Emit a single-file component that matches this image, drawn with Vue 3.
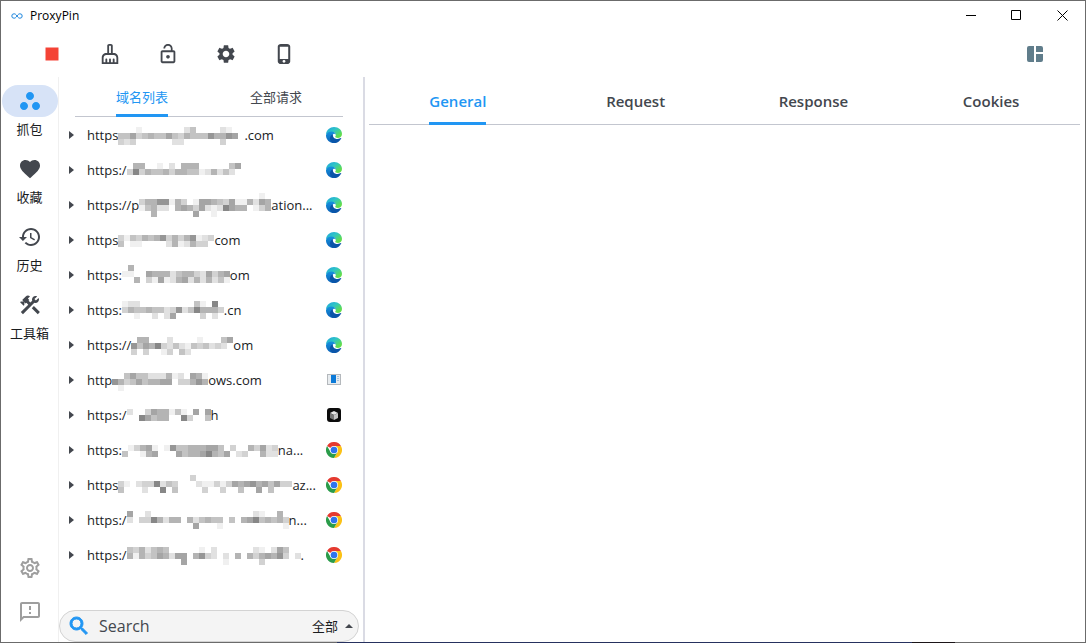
<script setup>
import { ref } from "vue";

const activeNav = ref("抓包");
const activeListTab = ref("域名列表");
const activeDetailTab = ref("General");
const keyword = ref("");
const scope = ref("全部");

const listTabs = ["域名列表", "全部请求"];
const detailTabs = ["General", "Request", "Response", "Cookies"];

const tools = [
  { name: "Stop", color: "#f44336", size: 26, path: "M6 6h12v12H6z" },
  {
    name: "Clear",
    color: "#43474e",
    size: 22,
    path: "M16 11h-1V3c0-1.1-.9-2-2-2h-2c-1.1 0-2 .9-2 2v8H8c-2.76 0-5 2.24-5 5v7h18v-7c0-2.76-2.24-5-5-5zm-5-8h2v8h-2V3zm8 18h-2v-3c0-.55-.45-1-1-1s-1 .45-1 1v3h-2v-3c0-.55-.45-1-1-1s-1 .45-1 1v3H9v-3c0-.55-.45-1-1-1s-1 .45-1 1v3H5v-5c0-1.65 1.35-3 3-3h8c1.65 0 3 1.35 3 3v5z",
  },
  {
    name: "HTTPS",
    color: "#43474e",
    size: 22,
    path: "M12 17c1.1 0 2-.9 2-2s-.9-2-2-2-2 .9-2 2 .9 2 2 2zm6-9h-1V6c0-2.76-2.24-5-5-5S7 3.24 7 6h1.9c0-1.71 1.39-3.1 3.1-3.1 1.71 0 3.1 1.39 3.1 3.1v2H6c-1.1 0-2 .9-2 2v10c0 1.1.9 2 2 2h12c1.1 0 2-.9 2-2V10c0-1.1-.9-2-2-2zm0 12H6V10h12v10z",
  },
  {
    name: "Settings",
    color: "#43474e",
    size: 22,
    path: "M19.14 12.94c.04-.3.06-.61.06-.94 0-.32-.02-.64-.07-.94l2.03-1.58c.18-.14.23-.41.12-.61l-1.92-3.32c-.12-.22-.37-.29-.59-.22l-2.39.96c-.5-.38-1.03-.7-1.62-.94l-.36-2.54c-.04-.24-.24-.41-.48-.41h-3.84c-.24 0-.43.17-.47.41l-.36 2.54c-.59.24-1.13.57-1.62.94l-2.39-.96c-.22-.08-.47 0-.59.22L2.74 8.87c-.12.21-.08.47.12.61l2.03 1.58c-.05.3-.09.63-.09.94s.02.64.07.94l-2.03 1.58c-.18.14-.23.41-.12.61l1.92 3.32c.12.22.37.29.59.22l2.39-.96c.5.38 1.03.7 1.62.94l.36 2.54c.05.24.24.41.48.41h3.84c.24 0 .44-.17.47-.41l.36-2.54c.59-.24 1.13-.56 1.62-.94l2.39.96c.22.08.47 0 .59-.22l1.92-3.32c.12-.22.07-.47-.12-.61l-2.01-1.58zM12 15.6c-1.98 0-3.6-1.62-3.6-3.6s1.62-3.6 3.6-3.6 3.6 1.62 3.6 3.6-1.62 3.6-3.6 3.6z",
  },
  {
    name: "Phone",
    color: "#43474e",
    size: 22,
    path: "M15.500 1h-7C6.800 1 5.200 2.100 5.200 3.800v16.400c0 1.700 1.600 2.800 3.300 2.800h7c1.700 0 3.300-1.100 3.300-2.800V3.800c0-1.700-1.600-2.800-3.300-2.800zM12 21.500c-.9 0-1.600-.7-1.600-1.500s.7-1.500 1.600-1.500 1.600.7 1.600 1.500-.7 1.500-1.600 1.500zM16.600 17.500H7.400V4h9.200v13.500z",
  },
];

const navItems = [
  {
    label: "抓包",
    path: "M6 13c-2.2 0-4 1.8-4 4s1.8 4 4 4 4-1.8 4-4-1.8-4-4-4zm6-10C9.8 3 8 4.8 8 7s1.8 4 4 4 4-1.8 4-4-1.8-4-4-4zm6 10c-2.2 0-4 1.8-4 4s1.8 4 4 4 4-1.8 4-4-1.8-4-4-4z",
  },
  {
    label: "收藏",
    path: "M12 21.35l-1.45-1.32C5.4 15.36 2 12.28 2 8.5 2 5.42 4.42 3 7.5 3c1.74 0 3.41.81 4.5 2.09C13.09 3.81 14.76 3 16.5 3 19.58 3 22 5.42 22 8.5c0 3.78-3.4 6.86-8.55 11.54L12 21.35z",
  },
  {
    label: "历史",
    path: "M13 3c-4.97 0-9 4.03-9 9H1l3.89 3.89.07.14L9 12H6c0-3.87 3.13-7 7-7s7 3.13 7 7-3.13 7-7 7c-1.93 0-3.68-.79-4.94-2.06l-1.42 1.42C8.27 19.99 10.51 21 13 21c4.97 0 9-4.03 9-9s-4.03-9-9-9zm-1 5v5l4.28 2.54.72-1.21-3.5-2.08V8H12z",
  },
  {
    label: "工具箱",
    path: "M13.783 15.172l2.121-2.121 5.996 5.996-2.121 2.121zM17.5 10c1.93 0 3.5-1.57 3.5-3.5 0-.58-.16-1.12-.41-1.6l-2.7 2.7-1.49-1.49 2.7-2.7c-.48-.25-1.02-.41-1.6-.41C15.57 3 14 4.57 14 6.5c0 .41.08.8.21 1.16l-1.85 1.85-1.78-1.78.71-.71-1.41-1.41L12 3.49c-1.17-1.17-3.07-1.17-4.24 0L4.22 7.03l1.41 1.41H2.81l-.71.71 3.54 3.54.71-.71V9.15l1.41 1.41.71-.71 1.78 1.78-7.41 7.41 2.12 2.12L16.34 9.79c.36.13.75.21 1.16.21z",
  },
];

// mask: one digit per 6px block, a higher digit is a darker grey
const domains = [
  { start: "https", end: ".com", app: "edge", y: 10, mask: ["...1.......24....21..", "44634544643544475576.", "323......22......3..."] },
  { start: "https:/", end: "", app: "edge", y: 11, mask: [".55..1.2.555.....46", "383544535544125242."] },
  { start: "https://p", end: "ation...", app: "edge", y: 6, mask: ["....................1.", "35577153.1665436115265", "14522.565362128655.135", "..5......6..1........."] },
  { start: "https", end: "com", app: "edge", y: 13, mask: ["3143545735357123", "4.11....2512533."] },
  { start: "https:", end: "om", app: "edge", y: 8, mask: [".5................", "11..65552455326356", "..5.31612562525241"] },
  { start: "https:", end: ".cn", app: "edge", y: 9, mask: ["122.........41.8.", "35445442372485553", "..1..2.26....3.2."] },
  { start: "https://", end: "om", app: "edge", y: 10, mask: [".55...2....1...46", "7465832421434232.", "3.3..13.42......."] },
  { start: "http", end: "ows.com", app: "window", y: 11, mask: ["..4644222512.651", "7534645566.33575", ".1.............."] },
  { start: "https:/", end: "h", app: "cube", y: 12, mask: ["2..3655141.6.6", "..86455..83..4"] },
  { start: "https:", end: "na...", app: "chrome", y: 13, mask: [".13561.1744555664.3..53623", "4..156...645568546.23..522"] },
  { start: "https", end: "az...", app: "chrome", y: 8, mask: ["............3................", "31.2338243...2113136567564633", "4...2..8.4....3..3..4..6.4..."] },
  { start: "https:/", end: "n...", app: "chrome", y: 9, mask: ["6..2.................21..5.", "2.3385255.524544.4.56845453", "...........6...1..........1"] },
  { start: "https:/", end: ".", app: "chrome", y: 10, mask: ["4352454.....1.2......21.264..", "5153465266.5732.2.5.5356573.2", ".........6......1.....3......"] },
];

const blocks = (domain) => {
  const result = [];
  domain.mask.forEach((line, row) => {
    [...line].forEach((level, col) => {
      if (level === ".") return;
      const grey = 255 - level * 15;
      result.push({
        x: col * 6,
        y: domain.y + row * 6,
        fill: `rgb(${grey}, ${grey}, ${grey})`,
      });
    });
  });
  return result;
};
</script>

<template>
  <div class="window">
    <header class="title-bar">
      <svg class="logo" viewBox="0 0 12 6" width="12" height="6">
        <path
          d="M6 3C5 1.500 4.200.8 3 .8a2.200 2.200 0 0 0 0 4.400C4.200 5.200 5 4.500 6 3s1.800-2.200 3-2.200a2.200 2.200 0 0 1 0 4.400C7.800 5.200 7 4.500 6 3z"
          fill="none"
          stroke="#1b84dc"
        />
      </svg>
      <h1>ProxyPin</h1>
      <div class="window-buttons">
        <button aria-label="Minimize">
          <svg width="11" height="11"><path d="M1 5.500h10" stroke="#000" /></svg>
        </button>
        <button aria-label="Maximize">
          <svg width="11" height="11">
            <path d="M.5.5h9v9h-9z" fill="none" stroke="#000" />
          </svg>
        </button>
        <button aria-label="Close">
          <svg width="11" height="11">
            <path d="M.5.5l10 10M10.500.5l-10 10" stroke="#000" />
          </svg>
        </button>
      </div>
    </header>

    <div class="toolbar">
      <button v-for="tool in tools" :key="tool.name" :aria-label="tool.name">
        <svg
          viewBox="0 0 24 24"
          :width="tool.size"
          :height="tool.size"
          :fill="tool.color"
        >
          <path :d="tool.path" fill-rule="evenodd" />
        </svg>
      </button>
      <button class="layout-button" aria-label="Layout">
        <svg viewBox="0 0 16 16" width="16" height="16" fill="#607d8b">
          <path
            d="M2 0h5v16H2a2 2 0 0 1-2-2V2a2 2 0 0 1 2-2zM9 0h5a2 2 0 0 1 2 2v4H9zM9 8h7v6a2 2 0 0 1-2 2H9z"
          />
        </svg>
      </button>
    </div>

    <main>
      <nav class="rail">
        <button
          v-for="item in navItems"
          :key="item.label"
          class="nav-item"
          :class="{ active: activeNav === item.label }"
          @click="activeNav = item.label"
        >
          <span class="pill">
            <svg viewBox="0 0 24 24" width="24" height="24" fill="currentColor">
              <path :d="item.path" />
            </svg>
          </span>
          <span>{{ item.label }}</span>
        </button>
        <div class="rail-bottom">
          <button aria-label="Preferences">
            <svg viewBox="0 0 24 24" width="24" height="24" fill="#9e9e9e">
              <path
                d="M19.430 12.980c.04-.32.07-.64.07-.98s-.03-.66-.07-.98l2.110-1.650c.19-.15.24-.42.12-.64l-2-3.460c-.09-.16-.26-.25-.44-.25-.06 0-.12.01-.17.03l-2.490 1c-.52-.4-1.080-.73-1.690-.98l-.38-2.650C14.460 2.180 14.250 2 14 2h-4c-.25 0-.46.18-.49.42l-.38 2.650c-.61.25-1.170.59-1.690.98l-2.490-1c-.06-.02-.12-.03-.18-.03-.17 0-.34.09-.43.25l-2 3.460c-.13.22-.07.49.12.64l2.110 1.650c-.04.32-.07.65-.07.98s.03.66.07.98l-2.110 1.650c-.19.15-.24.42-.12.64l2 3.460c.09.16.26.25.44.25.06 0 .12-.01.17-.03l2.490-1c.52.4 1.080.73 1.690.98l.38 2.650c.03.24.24.42.49.42h4c.25 0 .46-.18.49-.42l.38-2.650c.61-.25 1.170-.59 1.690-.98l2.490 1c.06.02.12.03.18.03.17 0 .34-.09.43-.25l2-3.460c.12-.22.07-.49-.12-.64l-2.110-1.650zm-1.980-1.710c.04.31.05.52.05.73s-.02.43-.05.73l-.14 1.130.89.7 1.080.84-.7 1.210-1.270-.51-1.040-.42-.9.68c-.43.32-.84.56-1.250.73l-1.060.43-.16 1.130-.2 1.350h-1.400l-.19-1.350-.16-1.130-1.060-.43c-.43-.18-.83-.41-1.230-.71l-.91-.7-1.060.43-1.270.51-.7-1.210 1.080-.84.89-.7-.14-1.130c-.03-.31-.05-.54-.05-.74s.02-.43.05-.73l.14-1.130-.89-.7-1.080-.84.7-1.210 1.270.51 1.040.42.9-.68c.43-.32.84-.56 1.250-.73l1.060-.43.16-1.130.2-1.350h1.390l.19 1.350.16 1.130 1.060.43c.43.18.83.41 1.230.71l.91.7 1.060-.43 1.270-.51.7 1.210-1.070.85-.89.7.14 1.130zM12 8c-2.210 0-4 1.790-4 4s1.790 4 4 4 4-1.790 4-4-1.790-4-4-4zm0 6c-1.100 0-2-.9-2-2s.9-2 2-2 2 .9 2 2-.9 2-2 2z"
              />
            </svg>
          </button>
          <button aria-label="Feedback">
            <svg viewBox="0 0 24 24" width="24" height="24" fill="#9e9e9e">
              <path
                d="M20 2H4c-1.100 0-1.990.9-1.990 2L2 22l4-4h14c1.100 0 2-.9 2-2V4c0-1.100-.9-2-2-2zm0 14H5.170L4 17.170V4h16v12zm-9-4h2v2h-2zm0-6h2v4h-2z"
              />
            </svg>
          </button>
        </div>
      </nav>

      <section class="list-pane">
        <div class="list-tabs" role="tablist">
          <button
            v-for="tab in listTabs"
            :key="tab"
            role="tab"
            :aria-selected="activeListTab === tab"
            :class="{ active: activeListTab === tab }"
            @click="activeListTab = tab"
          >
            <span>{{ tab }}</span>
          </button>
        </div>

        <ul class="domains">
          <li v-for="(domain, index) in domains" :key="index">
            <svg class="arrow" width="5" height="8">
              <path d="M0 0l5 4-5 4z" fill="#43474e" />
            </svg>
            <span class="url">
              <span>{{ domain.start }}</span>
              <svg
                :width="domain.mask[0].length * 6"
                height="35"
                shape-rendering="crispEdges"
              >
                <rect
                  v-for="(block, i) in blocks(domain)"
                  :key="i"
                  :x="block.x"
                  :y="block.y"
                  width="6"
                  height="6"
                  :fill="block.fill"
                />
              </svg>
              <span>{{ domain.end }}</span>
            </span>
            <svg
              v-if="domain.app === 'edge'"
              viewBox="0 0 16 16"
              width="16"
              height="16"
            >
              <defs>
                <linearGradient id="edge-top" x1="0" y1="0" x2="1" y2="1">
                  <stop offset="0" stop-color="#1d9fe0" />
                  <stop offset=".4" stop-color="#2fc5c6" />
                  <stop offset=".8" stop-color="#62dd4c" />
                </linearGradient>
                <linearGradient id="edge-side" x1="0" y1="0" x2="0" y2="1">
                  <stop offset="0" stop-color="#1592de" />
                  <stop offset="1" stop-color="#0b62b8" />
                </linearGradient>
              </defs>
              <path
                d="M0 7C.5 3 4 0 8 0c4.600 0 8 3.200 8 7 0 2.600-2 4-4.200 4-1.600 0-2.600-.6-2.600-1.200 0-.5.6-.8.6-1.900C9.800 6.200 8.200 5 6 5 3 5 .8 6.400 0 8z"
                fill="url(#edge-top)"
              />
              <path
                d="M0 8c.8-2.400 3-3.500 5.500-3.500 2.700 0 4.300 1.500 4.300 3.300C9.300 7 8.500 6.600 7.500 7 5.500 7.800 5 11 7 13c1 1 2 1.600 3.500 2.500-.8.4-1.600.5-2.500.5-4.600 0-8.200-3.600-8-8z"
                fill="url(#edge-side)"
              />
              <path
                d="M7 7.200C6.400 9.500 8 12 11.500 12c1.500 0 2.700-.5 3.400-.9.3-.1.500.1.300.4C13.800 14.200 11.700 16 8.700 16 5.500 16 4 13.500 4 11.300 4 9.200 5.300 7.700 7 7.200z"
                fill="#0b55a8"
              />
            </svg>
            <svg
              v-else-if="domain.app === 'chrome'"
              viewBox="0 0 48 48"
              width="16"
              height="16"
            >
              <path
                d="M24 24L3.200 12A24 24 0 0 1 44.800 12z"
                fill="#e53a30"
              />
              <path d="M24 12h20.800A24 24 0 0 1 24 48l10.400-18z" fill="#fbc116" />
              <path d="M3.200 12A24 24 0 0 0 24 48l10.400-18H13.600z" fill="#2a9c4a" />
              <circle cx="24" cy="24" r="12" fill="#fff" />
              <circle cx="24" cy="24" r="10" fill="#2f74ec" />
            </svg>
            <svg
              v-else-if="domain.app === 'window'"
              viewBox="0 0 16 16"
              width="16"
              height="16"
            >
              <path d="M1 2h14v11H1z" fill="#b4b8bc" />
              <path d="M2 3h12v9H2z" fill="#e8ecef" />
              <path d="M5 3h5v8H5z" fill="#0b7ad8" />
              <path d="M11 4h2v1h-2zM11 6h2v1h-2zM11 8h2v1h-2z" fill="#a9c3dc" />
            </svg>
            <svg v-else viewBox="0 0 16 16" width="16" height="16">
              <rect x="1" y="1" width="14" height="14" rx="3" fill="#0b0b0b" />
              <path d="M8 4l4 2-4 2-4-2z" fill="#e6e6e6" />
              <path d="M4 6l4 2v5l-4-2z" fill="#777" />
              <path d="M12 6v5l-4 2V8z" fill="#c4c4c4" />
            </svg>
          </li>
        </ul>

        <form class="search" @submit.prevent>
          <label for="keyword" aria-label="Search">
            <svg viewBox="0 0 24 24" width="24" height="24" fill="#2196f3">
              <path
                d="M15.500 14h-.79l-.28-.27C15.410 12.590 16 11.110 16 9.500 16 5.910 13.090 3 9.500 3S3 5.910 3 9.500 5.910 16 9.500 16c1.610 0 3.090-.59 4.230-1.570l.27.28v.79l5 4.990L20.490 19l-4.990-5zm-6 0C7.010 14 5 11.990 5 9.500S7.010 5 9.500 5 14 7.010 14 9.500 11.990 14 9.500 14z"
                stroke="#2196f3"
              />
            </svg>
          </label>
          <input id="keyword" v-model="keyword" type="text" placeholder="Search" />
          <select v-model="scope" aria-label="Scope">
            <option>全部</option>
          </select>
          <svg width="8" height="4"><path d="M0 4l4-4 4 4z" fill="#43474e" /></svg>
        </form>
      </section>

      <section class="detail-pane">
        <div class="detail-tabs" role="tablist">
          <button
            v-for="tab in detailTabs"
            :key="tab"
            role="tab"
            :aria-selected="activeDetailTab === tab"
            :class="{ active: activeDetailTab === tab }"
            @click="activeDetailTab = tab"
          >
            <span>{{ tab }}</span>
          </button>
        </div>
      </section>
    </main>
    <div class="bottom-edge"></div>
  </div>
</template>

<style>
body {
  margin: 0;
}
</style>

<style scoped>
.window {
  box-sizing: border-box;
  min-height: 100vh;
  display: flex;
  flex-direction: column;
  border: 1px solid #6b6b6b;
  border-bottom: none;
  background-color: #fff;
  color: #1a1c1e;
  font-family: "Open Sans", "Noto Sans CJK SC", sans-serif;
  font-size: 13px;
}

button {
  display: flex;
  align-items: center;
  justify-content: center;
  padding: 0;
  border: none;
  background: none;
  color: inherit;
  font: inherit;
  cursor: pointer;
}

svg {
  display: block;
  flex-shrink: 0;
}

.title-bar {
  display: flex;
  align-items: center;
  height: 29px;
  padding-left: 10px;
}

h1 {
  flex: 1;
  margin: 0 0 0 7px;
  color: #000;
  font-size: 12px;
  font-weight: normal;
}

.window-buttons {
  display: flex;
}

.window-buttons button {
  width: 46px;
  height: 29px;
}

.toolbar {
  display: flex;
  align-items: center;
  height: 47px;
  padding-left: 22px;
  padding-right: 21px;
}

.toolbar button {
  width: 58px;
  height: 40px;
}

.toolbar .layout-button {
  margin-left: auto;
}

main {
  flex: 1;
  display: flex;
}

.bottom-edge {
  height: 1px;
  background: linear-gradient(
    to right,
    #6b6b6b 31%,
    #26315f 31%,
    #26315f 84%,
    #1b1518 84%,
    #1b1518 88%,
    #6b6b6b 88%
  );
}

.rail {
  display: flex;
  flex-direction: column;
  align-items: center;
  width: 57px;
  padding-top: 8px;
  border-right: 1px solid #f0f0f0;
}

.nav-item {
  flex-direction: column;
  justify-content: flex-start;
  height: 68px;
  line-height: 24px;
}

.pill {
  display: flex;
  align-items: center;
  justify-content: center;
  width: 56px;
  height: 32px;
  border-radius: 16px;
  color: #43474e;
}

.active .pill {
  background-color: #d7e3f7;
  color: #2196f3;
}

.rail-bottom {
  display: flex;
  flex-direction: column;
  gap: 20px;
  margin-top: auto;
  padding-bottom: 18px;
}

.list-pane {
  display: flex;
  flex-direction: column;
  width: 304px;
  border-right: 2px solid #dadbe4;
}

.list-tabs {
  display: flex;
  height: 39px;
  margin: 0 20px 0 16px;
  border-bottom: 1px solid #c3c6cf;
  color: #43474e;
}

.list-tabs button,
.detail-tabs button {
  flex: 1;
  margin-bottom: -1px;
}

.list-tabs span,
.detail-tabs span {
  box-sizing: border-box;
  height: 100%;
  border-bottom: 3px solid transparent;
}

.list-tabs span {
  line-height: 40px;
}

.list-tabs .active span,
.detail-tabs .active span {
  border-color: #2196f3;
  border-radius: 2px 2px 0 0;
  color: #2196f3;
}

.domains {
  flex: 1;
  margin: 0;
  padding: 0;
  list-style: none;
}

.domains li {
  display: flex;
  align-items: center;
  height: 35px;
  padding: 0 21px 0 10px;
}

.url {
  flex: 1;
  display: flex;
  align-items: center;
  margin-left: 13px;
  white-space: nowrap;
}

.search {
  display: flex;
  align-items: center;
  height: 30px;
  margin-right: 4px;
  padding: 0 5px 0 7px;
  border: 1px solid #d3d3d3;
  border-radius: 16px;
  background-color: #f4f4f4;
}

.search input {
  flex: 1;
  min-width: 0;
  padding: 0 0 0 8px;
  border: none;
  outline: none;
  background: none;
  font: inherit;
  font-size: 16px;
}

.search input::placeholder {
  color: #43474e;
}

.search select {
  appearance: none;
  margin-right: 6px;
  padding: 0;
  border: none;
  background: none;
  color: inherit;
  font: inherit;
}

.detail-pane {
  flex: 1;
  padding: 0 5px 0 4px;
}

.detail-tabs {
  display: flex;
  height: 47px;
  border-bottom: 1px solid #c3c6cf;
  color: #43474e;
  font-size: 15px;
  font-weight: 600;
}

.detail-tabs span {
  line-height: 48px;
}
</style>
